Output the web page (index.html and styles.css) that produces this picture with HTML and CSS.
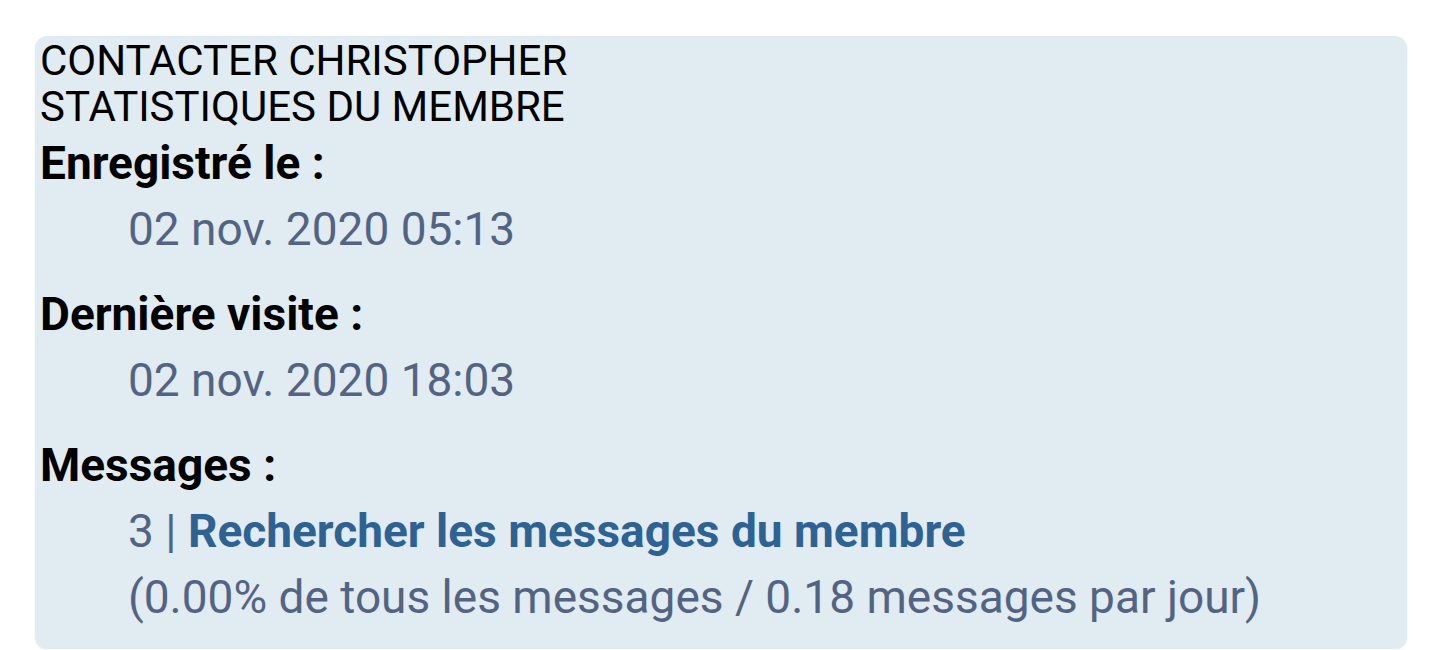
FILE: index.html
```html
<!DOCTYPE html>
<html lang="fr">
<head>
<meta charset="utf-8">
<title>Profil</title>
<link rel="stylesheet" href="styles.css">
</head>
<body>
<div class="panel">
  <h3 class="head">CONTACTER CHRISTOPHER</h3>
  <h3 class="head">STATISTIQUES DU MEMBRE</h3>
  <dl class="details">
    <dt>Enregistré le :</dt>
    <dd>02 nov. 2020 05:13</dd>
    <dt>Dernière visite :</dt>
    <dd>02 nov. 2020 18:03</dd>
    <dt>Messages :</dt>
    <dd>3 | <a href="#" class="link">Rechercher les messages du membre</a><br>(0.00% de tous les messages / 0.18 messages par jour)</dd>
  </dl>
</div>
</body>
</html>
```

FILE: styles.css
```css
html, body {
  margin: 0;
  padding: 0;
  background: #ffffff;
}
body {
  font-family: Roboto, "Noto Sans", sans-serif;
  padding: 36px 33px 0 35px;
}
.panel {
  background: #e1ebf2;
  border-radius: 12px;
  padding: 2px 5px 19px 5px;
  box-shadow: 0 1px 2px rgba(0,0,0,0.06);
}
.head {
  margin: 0;
  font-size: 42px;
  line-height: 46px;
  font-weight: 400;
  color: #000;
}
.details {
  margin: 0;
}
.details dt {
  font-size: 46px;
  line-height: 66px;
  font-weight: 700;
  color: #000;
}
.details dd {
  margin: 0 0 19px 88px;
  font-size: 46px;
  line-height: 66px;
  color: #536482;
}
.details dd:last-child {
  margin-bottom: 0;
}
.link {
  color: #2d6292;
  font-weight: 700;
  text-decoration: none;
}
```
